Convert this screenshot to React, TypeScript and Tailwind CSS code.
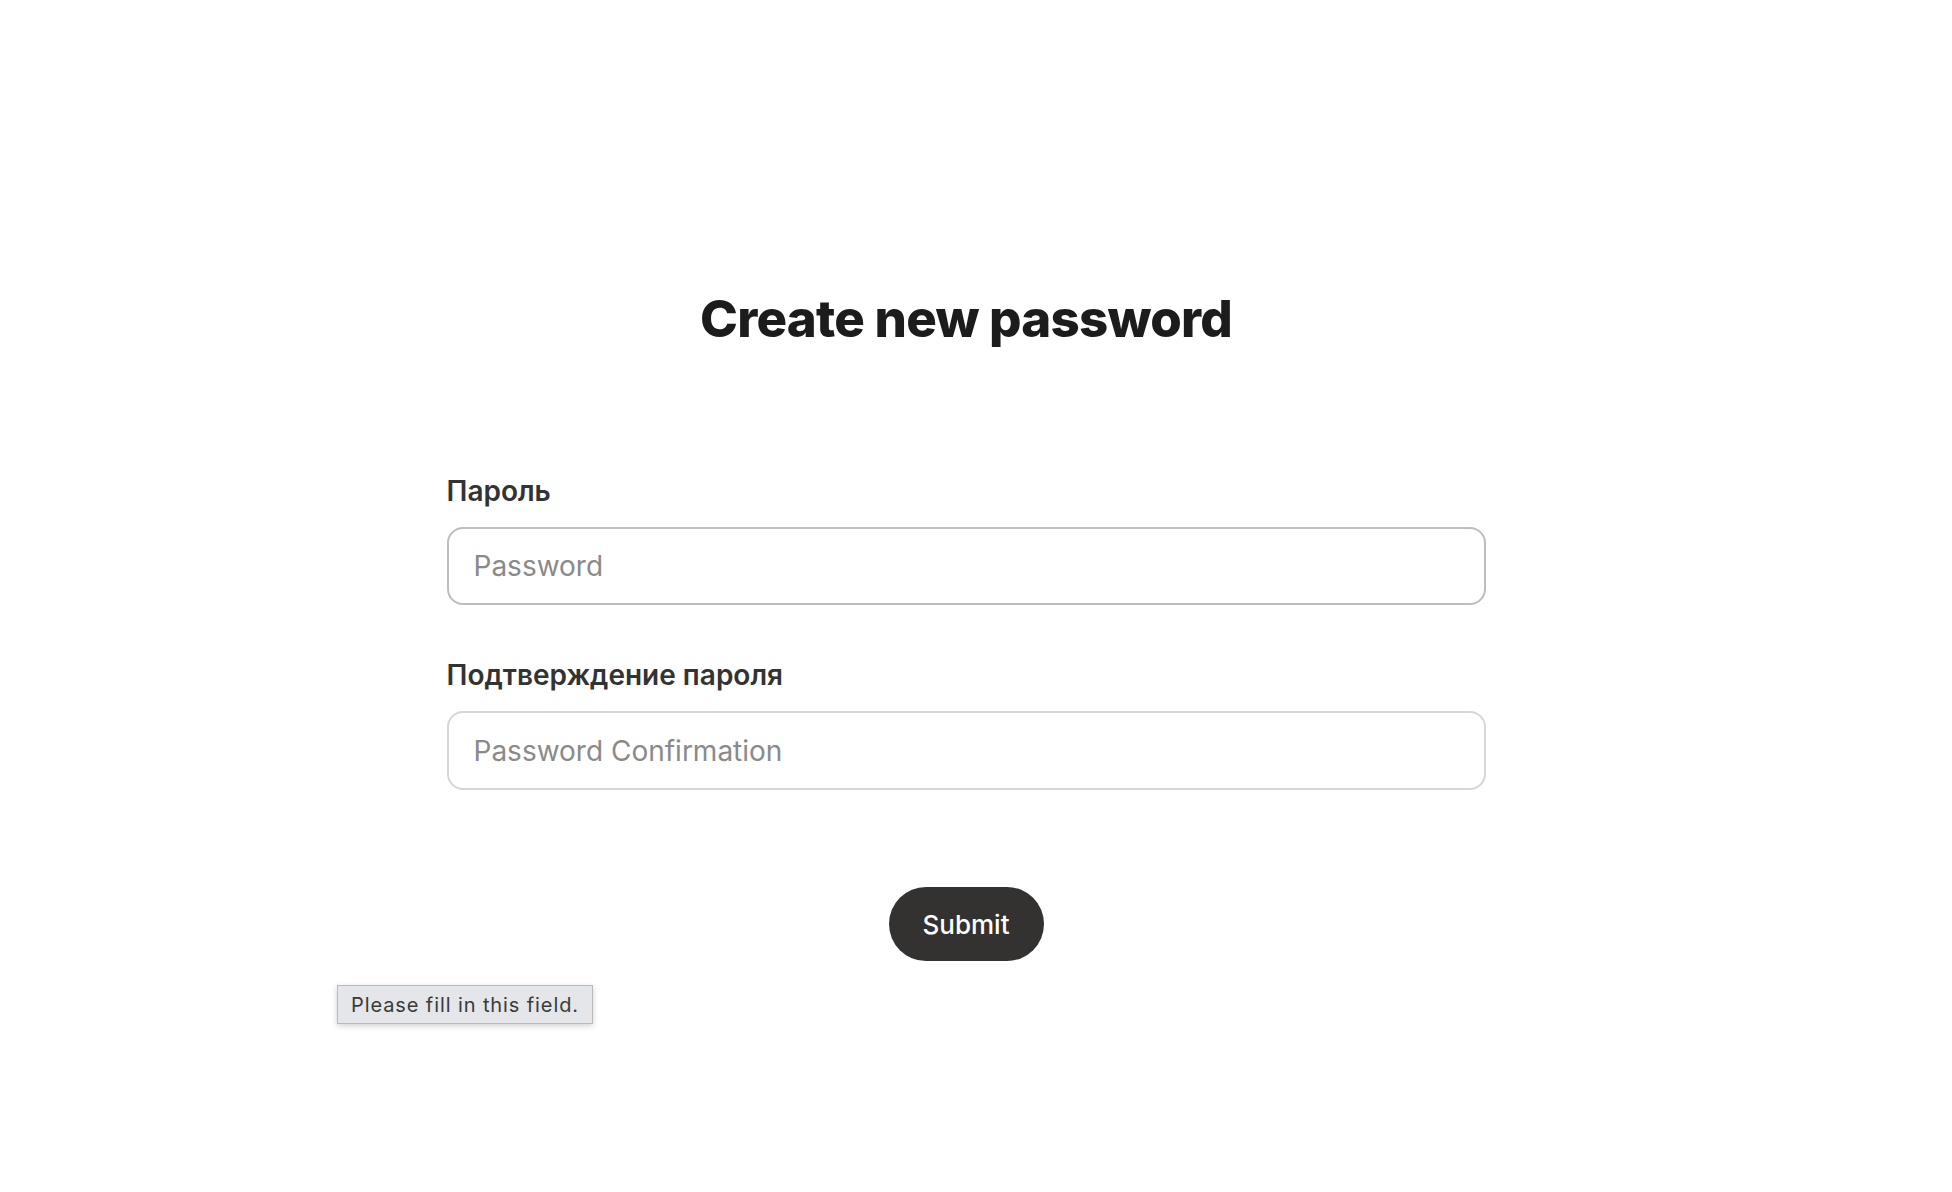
export default function App() {
  return (
    <div className="relative min-h-[1192px] bg-white pr-5" style={{ fontFamily: 'Inter, "Noto Sans", sans-serif' }}>
      <form className="mx-auto flex w-[1039px] flex-col pt-[294px]" onSubmit={(e) => e.preventDefault()}>
        <h1 className="text-center text-[51px] font-extrabold leading-[50px] tracking-[-0.015em] text-[#1c1c1c]">
          Create new password
        </h1>

        <label className="mt-[130px] text-[28px] font-semibold leading-[34px] text-[#333333]">Пароль</label>
        <input
          type="password"
          placeholder="Password"
          className="mt-[19px] h-[78px] w-full rounded-2xl border-2 border-[#bdbdbd] bg-white px-[25px] text-[28px] text-[#333] outline-none placeholder:text-[#8a8a8a]"
        />

        <label className="mt-[53px] text-[28px] font-semibold leading-[34px] text-[#333333]">Подтверждение пароля</label>
        <input
          type="password"
          placeholder="Password Confirmation"
          className="mt-[19px] h-[79px] w-full rounded-2xl border-2 border-[#d6d6d6] bg-white px-[25px] text-[28px] text-[#333] outline-none placeholder:text-[#8a8a8a]"
        />

        <div className="mt-[97px] flex justify-center">
          <button type="submit" className="h-[74px] w-[155px] rounded-full bg-[#333231] text-[26px] font-medium text-white">
            Submit
          </button>
        </div>
      </form>

      <div className="absolute left-[337px] top-[985px] flex h-[39px] w-[256px] items-center border border-[#b9b9b9] bg-[#e4e6e9] px-[13px] text-[20px] tracking-[0.045em] text-[#3a3a3a] shadow-[0_2px_6px_rgba(0,0,0,0.18)]">
        Please fill in this field.
      </div>
    </div>
  )
}
